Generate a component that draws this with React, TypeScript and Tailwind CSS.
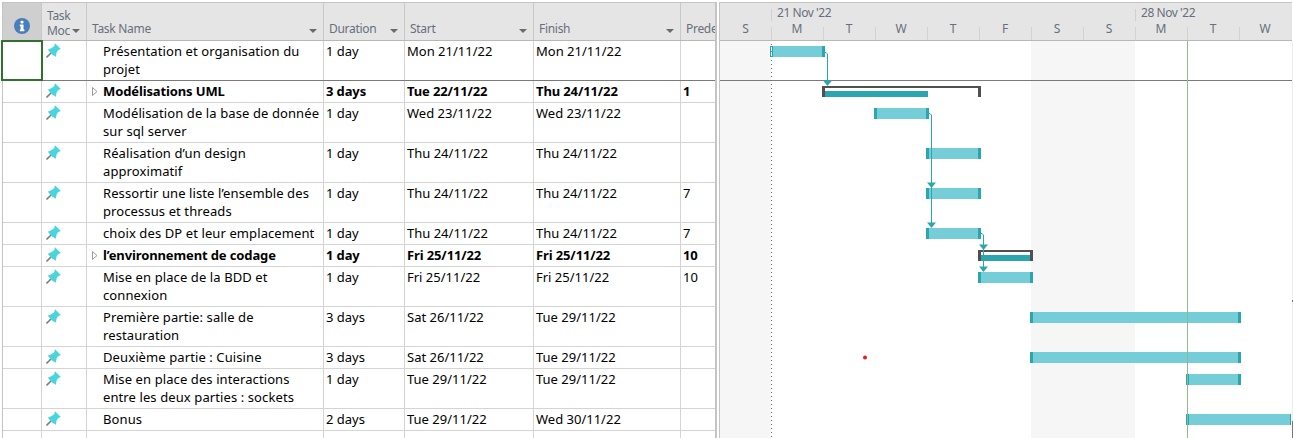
import React from "react";

type Row = { h: number; name: string[]; dur: string; start: string; finish: string; pred?: string; bold?: boolean; arrow?: boolean; dark?: boolean };

const rows: Row[] = [
  { h: 40, name: ["Présentation et organisation du", "projet"], dur: "1 day", start: "Mon 21/11/22", finish: "Mon 21/11/22", dark: true },
  { h: 22, name: ["Modélisations UML"], dur: "3 days", start: "Tue 22/11/22", finish: "Thu 24/11/22", pred: "1", bold: true, arrow: true },
  { h: 40, name: ["Modélisation de la base de donnée", "sur sql server"], dur: "1 day", start: "Wed 23/11/22", finish: "Wed 23/11/22" },
  { h: 40, name: ["Réalisation d’un design", "approximatif"], dur: "1 day", start: "Thu 24/11/22", finish: "Thu 24/11/22" },
  { h: 40, name: ["Ressortir une liste l’ensemble des", "processus et threads"], dur: "1 day", start: "Thu 24/11/22", finish: "Thu 24/11/22", pred: "7" },
  { h: 22, name: ["choix des DP et leur emplacement"], dur: "1 day", start: "Thu 24/11/22", finish: "Thu 24/11/22", pred: "7" },
  { h: 22, name: ["l’environnement de codage"], dur: "1 day", start: "Fri 25/11/22", finish: "Fri 25/11/22", pred: "10", bold: true, arrow: true },
  { h: 40, name: ["Mise en place de la BDD et", "connexion"], dur: "1 day", start: "Fri 25/11/22", finish: "Fri 25/11/22", pred: "10" },
  { h: 40, name: ["Première partie: salle de", "restauration"], dur: "3 days", start: "Sat 26/11/22", finish: "Tue 29/11/22" },
  { h: 22, name: ["Deuxième partie : Cuisine"], dur: "3 days", start: "Sat 26/11/22", finish: "Tue 29/11/22" },
  { h: 40, name: ["Mise en place des interactions", "entre les deux parties : sockets"], dur: "1 day", start: "Tue 29/11/22", finish: "Tue 29/11/22" },
  { h: 22, name: ["Bonus"], dur: "2 days", start: "Tue 29/11/22", finish: "Wed 30/11/22" },
];

const gridCols = "grid grid-cols-[39px_45px_237px_81px_129px_147px_34px]";

function Caret() {
  return (
    <svg width="8" height="4" viewBox="0 0 8 4" className="block shrink-0">
      <path d="M0 0h8L4 4z" fill="#6a6a6a" />
    </svg>
  );
}

function Pin() {
  return (
    <svg width="15" height="15" viewBox="0 0 15 15" className="absolute left-[4px] top-[2px]">
      <path d="M0.5 14.5L5.5 9.5" stroke="#808080" strokeWidth="1.6" />
      <path d="M9 0.3L14.8 6L12 7.2L10.5 9.8L9.9 13.8L6 11.4L1.8 6.8L5.2 5.2L8.2 3.2Z" fill="#48d5dc" />
    </svg>
  );
}

function InfoIcon() {
  return (
    <svg width="16" height="16" viewBox="0 0 16 16" className="block">
      <circle cx="8" cy="8" r="8" fill="#4a7ebb" />
      <rect x="6.5" y="2.8" width="3" height="2.6" rx="1" fill="#fff" />
      <path d="M5.8 6.6H9.5V11.6H10.4V13.2H5.8V11.6H6.6V8.2H5.8Z" fill="#fff" />
    </svg>
  );
}

function HeaderCell({ label, caret = true, className = "" }: { label: string; caret?: boolean; className?: string }) {
  return (
    <div className={`flex items-end justify-between overflow-hidden pb-[2px] pl-[5px] pr-[6px] text-[12px] tracking-[-0.3px] ${className}`}>
      <span className="whitespace-nowrap text-[#66707c]">{label}</span>
      {caret && <span className="mb-[5px]"><Caret /></span>}
    </div>
  );
}

function Gantt() {
  const H = 397;
  const y = (v: number) => v - 41;
  const bar = (x: number, top: number, w: number, key: string) => (
    <g key={key}>
      <rect x={x} y={y(top)} width={w} height={11} fill="#75cdd7" />
      <rect x={x} y={y(top)} width={3} height={11} fill="#2ca6ae" />
      <rect x={x + w - 3} y={y(top)} width={3} height={11} fill="#2ca6ae" />
    </g>
  );
  const sum = (x: number, top: number, w: number, key: string) => (
    <path key={key} d={`M${x} ${y(top) + 11}V${y(top)}H${x + w}V${y(top) + 11}H${x + w - 3}V${y(top) + 2}H${x + 3}V${y(top) + 11}Z`} fill="#505050" />
  );
  const arrow = (x: number, tip: number, key: string) => (
    <path key={key} d={`M${x - 4.5} ${y(tip) - 5.5}H${x + 4.5}L${x} ${y(tip)}Z`} fill="#2ca6ae" />
  );
  const link = (x: number, from: number, to: number, key: string) => (
    <path key={key} d={`M${x - 3} ${y(from) + 0.5}H${x - 1}L${x + 0.5} ${y(from) + 2}V${y(to)}`} stroke="#2ca6ae" strokeWidth="1" fill="none" />
  );
  return (
    <svg width={573} height={H} viewBox={`0 0 573 ${H}`} className="block">
      <g transform="translate(-1 0)">
        <rect x={0} y={0} width={52} height={H} fill="#f6f6f6" />
        <rect x={312} y={0} width={104} height={H} fill="#f6f6f6" />
        <path d="M52.5 3V397" stroke="#707070" strokeWidth="1" strokeDasharray="1 3" />
        <rect x={0} y={39} width={573} height={1} fill="#7a7a7a" />

        {/* task 1 */}
        <rect x={51} y={5} width={55} height={11} fill="#75cdd7" />
        <rect x={51} y={5} width={3} height={11} fill="#fff" />
        <path d="M51.5 5V16M53.5 5V16M51 5.5H54M51 10.5H54M51 15.5H54" stroke="#2ca6ae" fill="none" />
        <rect x={103} y={5} width={3} height={11} fill="#2ca6ae" />

        {sum(103, 86, 159, "s1")}
        <rect x={106} y={50} width={103} height={6} fill="#2ca6ae" />
        {bar(155, 108, 55, "b3")}
        {bar(207, 148, 55, "b4")}
        {bar(207, 188, 55, "b5")}
        {bar(207, 228, 55, "b6")}
        {sum(259, 250, 55, "s2")}
        <rect x={262} y={214} width={49} height={6} fill="#2ca6ae" />
        {bar(259, 272, 55, "b8")}
        {bar(311, 312, 211, "b9")}
        {bar(311, 352, 211, "b10")}
        {bar(467, 374, 55, "b11")}
        <g>
          <rect x={467} y={373} width={105} height={11} fill="#75cdd7" />
          <rect x={467} y={373} width={3} height={11} fill="#2ca6ae" />
          <rect x={571} y={373} width={1} height={11} fill="#2ca6ae" />
        </g>

        {link(108, 52, 81, "l1")}
        {arrow(108.5, 86, "a1")}
        {link(212, 113, 223, "l2")}
        {arrow(212.5, 188, "a2")}
        {arrow(212.5, 228, "a3")}
        {link(264, 233, 268, "l3")}
        {arrow(264.5, 250, "a4")}
        {arrow(264.5, 272, "a5")}

        <path d="M468.5 0V397" stroke="#8fbc8f" strokeWidth="1" />
        <circle cx={146} cy={316.5} r={2} fill="#e81c1c" />

        <rect x={573} y={0} width={1} height={397} fill="#ececec" />
        <rect x={573} y={259} width={1} height={2} fill="#777777" />
        <rect x={573} y={380} width={1} height={17} fill="#777777" />
      </g>
    </svg>
  );
}

const days = ["S", "M", "T", "W", "T", "F", "S", "S", "M", "T", "W"];

export default function App() {
  return (
    <div className="flex h-[438px] w-[1293px] overflow-hidden bg-white pl-[2px] pt-[2px] text-[13px] leading-[18px] text-black [font-family:'Noto_Sans',sans-serif]">
      {/* table */}
      <div className="relative flex w-[715px] shrink-0 flex-col border-l border-r-2 border-t border-[#c4c4c4]">
        <div className={`${gridCols} h-[38px] shrink-0 border-b border-[#b8b8b8] bg-[#e5e5e5] divide-x divide-[#c8c8c8]`}>
          <div className="flex items-end justify-center bg-[#cfcfcf] pb-[6px]">
            <InfoIcon />
          </div>
          <div className="relative overflow-hidden pl-[5px] pt-[5px] text-[12px] leading-[15px] tracking-[-0.3px] text-[#66707c]">
            <div>Task</div>
            <div>Moc</div>
            <span className="absolute bottom-[7px] right-[6px]"><Caret /></span>
          </div>
          <HeaderCell label="Task Name" />
          <HeaderCell label="Duration" />
          <HeaderCell label="Start" />
          <HeaderCell label="Finish" />
          <HeaderCell label="Prede" caret={false} />
        </div>
        <div className="pointer-events-none absolute left-[-2px] top-[37px] z-10 h-[41px] w-[42px] border-2 border-[#31702f]" />
        {rows.map((r, i) => (
          <div
            key={i}
            style={{ height: r.h }}
            className={`${gridCols} shrink-0 border-b ${r.dark ? "border-[#7a7a7a]" : "border-[#d4d4d4]"} ${r.bold ? "font-bold tracking-[-0.12px]" : ""}`}
          >
            <div className="border-r border-[#d4d4d4]" />
            <div className="relative border-r border-[#d4d4d4]"><Pin /></div>
            <div className={`relative border-r border-[#d4d4d4] pl-[16px] pt-[1px] ${r.bold ? "" : "tracking-[0.1px]"}`}>
              {r.arrow && (
                <svg width="6" height="9" viewBox="0 0 6 9" className="absolute left-[5px] top-[6px]">
                  <path d="M0.5 0.5L5 4.5L0.5 8.5Z" fill="none" stroke="#9a9a9a" />
                </svg>
              )}
              {r.name.map((t) => (
                <div key={t} className="whitespace-nowrap">{t}</div>
              ))}
            </div>
            <div className="border-r border-[#d4d4d4] pl-[2px] pt-[1px]">{r.dur}</div>
            <div className="border-r border-[#d4d4d4] pl-[2px] pt-[1px]">{r.start}</div>
            <div className="border-r border-[#d4d4d4] pl-[2px] pt-[1px]">{r.finish}</div>
            <div className="pl-[2px] pt-[1px]">{r.pred}</div>
          </div>
        ))}
        <div className={`${gridCols} min-h-0 flex-1`}>
          <div className="border-r border-[#d4d4d4]" />
          <div className="border-r border-[#d4d4d4]" />
          <div className="border-r border-[#d4d4d4]" />
          <div className="border-r border-[#d4d4d4]" />
          <div className="border-r border-[#d4d4d4]" />
          <div className="border-r border-[#d4d4d4]" />
          <div />
        </div>
      </div>
      {/* timeline */}
      <div className="ml-[2px] flex w-[574px] shrink-0 flex-col border-l border-[#c4c4c4]">
        <div className="h-[39px] w-[572px] shrink-0 border-b border-t border-[#c4c4c4] border-b-[#b8b8b8] bg-[#e5e5e5]">
          <div className="flex h-[18px] text-[12px] leading-[15px] tracking-[-0.45px] text-[#66707c]">
            <div className="w-[51px]" />
            <div className="relative w-[364px] pl-[6px] pt-[2px]">
              <span className="absolute bottom-0 left-0 top-[6px] w-px bg-[#cfcfcf]" />
              21 Nov '22
            </div>
            <div className="relative flex-1 pl-[6px] pt-[2px]">
              <span className="absolute bottom-0 left-0 top-[6px] w-px bg-[#cfcfcf]" />
              28 Nov '22
            </div>
          </div>
          <div className="flex h-[19px]">
            {days.map((d, i) => (
              <div key={i} className={`relative text-center text-[12px] leading-[15px] text-[#66707c] ${i === 0 ? "w-[51px]" : "w-[52px]"}`}>
                {i > 0 && <span className="absolute bottom-0 left-0 h-[13px] w-px bg-[#d2d2d2]" />}
                {d}
              </div>
            ))}
          </div>
        </div>
        <Gantt />
      </div>
    </div>
  );
}
